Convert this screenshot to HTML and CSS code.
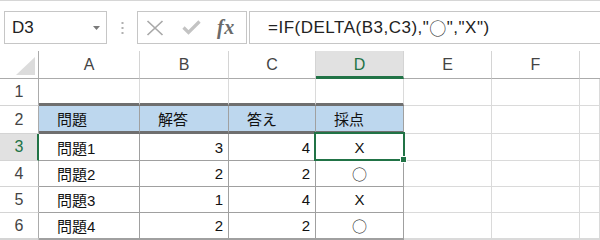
FILE: index.html
```html
<!DOCTYPE html>
<html lang="ja">
<head>
<meta charset="utf-8">
<link rel="stylesheet" href="styles.css">
</head>
<body>
<div class="top">
  <div class="namebox">
    <span>D3</span>
    <svg class="dd" width="7" height="4" viewBox="0 0 7 4"><polygon points="0,0 7,0 3.5,4" fill="#7a7a7a"/></svg>
  </div>
  <div class="sep">
    <svg width="3" height="12" viewBox="0 0 3 12"><rect x="0.5" y="0" width="2" height="2" fill="#b0b0b0"/><rect x="0.5" y="5" width="2" height="2" fill="#b0b0b0"/><rect x="0.5" y="10" width="2" height="2" fill="#b0b0b0"/></svg>
  </div>
  <div class="btns">
    <svg class="cross" width="18" height="16" viewBox="0 0 18 16"><path d="M1.5 1 L16.5 15 M16.5 1 L1.5 15" stroke="#a9a9a9" stroke-width="1.7" fill="none"/></svg>
    <svg class="check" width="19" height="15" viewBox="0 0 19 15"><path d="M1.5 7.5 L6.5 12.5 L17.5 1.5" stroke="#c3c3c3" stroke-width="3.2" fill="none"/></svg>
    <span class="fx">fx</span>
  </div>
  <div class="formula">=IF(DELTA(B3,C3),"<span class="maru">○</span>","X")</div>
</div>
<div class="sheet">
  <div class="c corner"><svg width="19" height="18" viewBox="0 0 19 18"><polygon points="19,0 19,18 0,18" fill="#dcdcdc"/></svg></div>
  <div class="c ch">A</div>
  <div class="c ch">B</div>
  <div class="c ch">C</div>
  <div class="c ch sel">D</div>
  <div class="c ch">E</div>
  <div class="c ch">F</div>
  <div class="c ch last"></div>

  <div class="c rh">1</div>
  <div class="c thick"></div>
  <div class="c thick"></div>
  <div class="c thick"></div>
  <div class="c thick"></div>
  <div class="c"></div>
  <div class="c"></div>
  <div class="c"></div>

  <div class="c rh">2</div>
  <div class="c t hd thick l">問題</div>
  <div class="c t hd thick l">解答</div>
  <div class="c t hd thick l">答え</div>
  <div class="c t hd thick l">採点</div>
  <div class="c"></div>
  <div class="c"></div>
  <div class="c"></div>

  <div class="c rh rsel">3</div>
  <div class="c t l">問題1</div>
  <div class="c t r">3</div>
  <div class="c t r">4</div>
  <div class="c t m active">X<span class="cursor"><span class="handle"></span></span></div>
  <div class="c"></div>
  <div class="c"></div>
  <div class="c"></div>

  <div class="c rh">4</div>
  <div class="c t l">問題2</div>
  <div class="c t r">2</div>
  <div class="c t r">2</div>
  <div class="c t m"><span class="maru">○</span></div>
  <div class="c"></div>
  <div class="c"></div>
  <div class="c"></div>

  <div class="c rh">5</div>
  <div class="c t l">問題3</div>
  <div class="c t r">1</div>
  <div class="c t r">4</div>
  <div class="c t m">X</div>
  <div class="c"></div>
  <div class="c"></div>
  <div class="c"></div>

  <div class="c rh">6</div>
  <div class="c t l">問題4</div>
  <div class="c t r">2</div>
  <div class="c t r">2</div>
  <div class="c t m"><span class="maru">○</span></div>
  <div class="c"></div>
  <div class="c"></div>
  <div class="c"></div>

  <div class="c rh"></div>
  <div class="c t"></div>
  <div class="c t"></div>
  <div class="c t"></div>
  <div class="c t"></div>
  <div class="c"></div>
  <div class="c"></div>
  <div class="c"></div>
</div>
</body>
</html>
```
FILE: styles.css
```css
html, body {
  margin: 0;
  padding: 0;
  background: #ffffff;
  width: 600px;
  height: 240px;
  overflow: hidden;
  font-family: "Liberation Sans", "Noto Sans CJK JP", sans-serif;
}

.maru {
  font-family: "Noto Sans CJK JP", sans-serif;
  font-weight: 300;
}

.top {
  box-sizing: border-box;
  height: 51px;
  border-top: 1px solid #d6d6d6;
  padding-top: 10px;
  display: flex;
  align-items: flex-start;
}

.namebox {
  box-sizing: border-box;
  margin-left: 4px;
  width: 103px;
  height: 33px;
  border: 1px solid #c6c6c6;
  display: flex;
  align-items: center;
  justify-content: space-between;
  padding: 0 6px 0 7px;
  font-size: 17px;
  color: #222;
}

.namebox .dd {
  margin-top: 1px;
}

.sep {
  width: 30px;
  height: 33px;
  display: flex;
  align-items: center;
  justify-content: center;
}

.btns {
  box-sizing: border-box;
  width: 110px;
  height: 33px;
  border: 1px solid #c6c6c6;
  display: flex;
  align-items: center;
  padding-left: 8px;
}

.btns .check {
  margin-left: 18px;
}

.btns .fx {
  margin-left: 16px;
  font-family: "Liberation Serif", "DejaVu Serif", serif;
  font-style: italic;
  font-weight: bold;
  font-size: 20px;
  color: #6a6a6a;
  letter-spacing: 0.5px;
  line-height: 1;
  margin-top: -2px;
}

.formula {
  box-sizing: border-box;
  flex: 1;
  margin-left: 2px;
  height: 33px;
  border: 1px solid #c6c6c6;
  border-right: none;
  padding-left: 18px;
  display: flex;
  align-items: center;
  font-size: 17px;
  letter-spacing: 0.5px;
  color: #222;
  white-space: nowrap;
}

.sheet {
  display: grid;
  grid-template-columns: 39px 101px 89px 87px 88px 88px 88px 1fr;
  grid-template-rows: 28px 27px 28px 27px 26px 26px 26px 1fr;
  height: 189px;
}

.c {
  box-sizing: border-box;
  border-right: 1px solid #dadada;
  border-bottom: 1px solid #dadada;
  font-size: 15px;
  color: #111;
  display: flex;
  align-items: center;
  white-space: nowrap;
  min-width: 0;
}

.corner {
  border-right: 1px solid #ababab;
  border-bottom: 1px solid #ababab;
  align-items: flex-end;
  justify-content: flex-end;
  padding: 0 3px 3px 0;
}

.ch {
  justify-content: center;
  font-size: 16px;
  color: #444;
  border-right: 1px solid #d4d4d4;
  border-bottom: 1px solid #ababab;
}

.ch.last {
  border-right: none;
}

.ch.sel {
  background: #e1e1e1;
  color: #217346;
  border-bottom: 3px solid #217346;
  padding-top: 2px;
}

.rh {
  justify-content: center;
  font-size: 16px;
  color: #444;
  border-right: 1px solid #ababab;
  border-bottom: 1px solid #d4d4d4;
}

.rh.rsel {
  background: #e1e1e1;
  color: #217346;
  border-right: 2px solid #217346;
  padding-left: 1px;
}

.t {
  border-right-color: #a0a0a0;
  border-bottom-color: #a0a0a0;
}

.hd {
  background: #bdd7ee;
}

.thick {
  border-bottom: 3px solid #6f6f6f;
}

.l {
  padding-left: 18px;
}

.r {
  justify-content: flex-end;
  padding-right: 5px;
}

.m {
  justify-content: center;
}

.active {
  position: relative;
}

.cursor {
  position: absolute;
  top: -2px;
  left: -2px;
  right: -2px;
  bottom: -1px;
  border: 2px solid #217346;
}

.handle {
  position: absolute;
  right: -4px;
  bottom: -4px;
  width: 5px;
  height: 5px;
  background: #217346;
  border: 1px solid #ffffff;
}
```
